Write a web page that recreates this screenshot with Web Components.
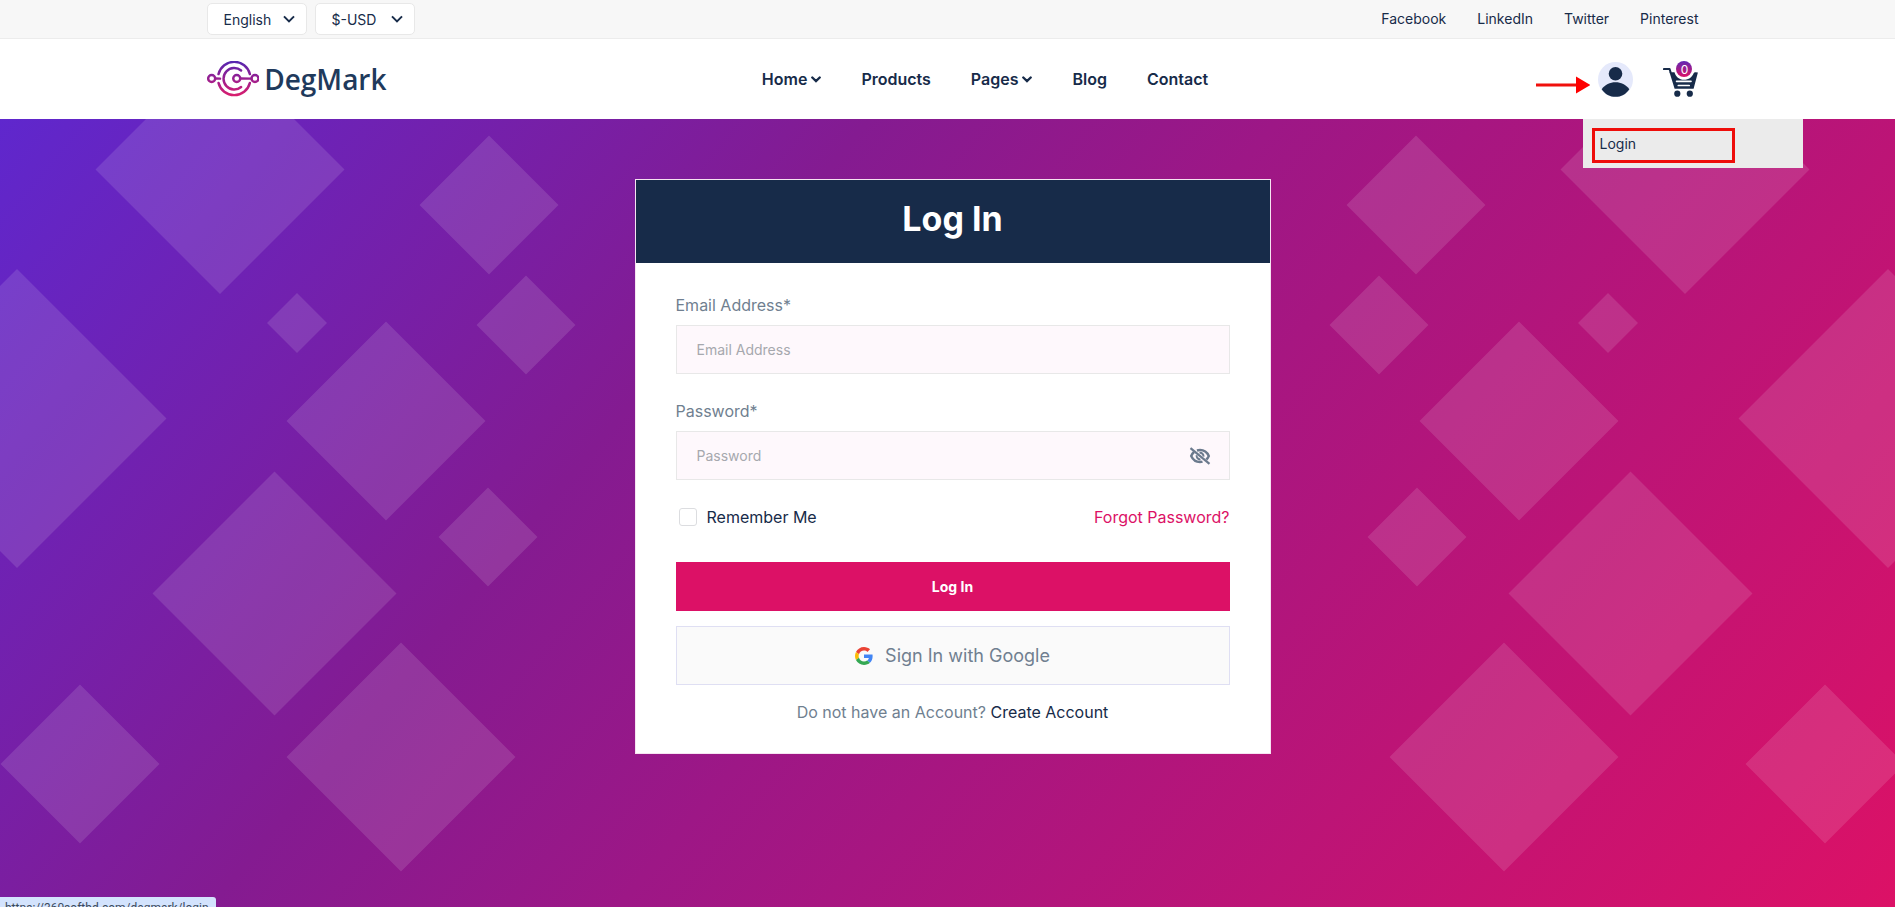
<!DOCTYPE html>
<html lang="en">
<head>
<meta charset="UTF-8">
<meta name="viewport" content="width=device-width, initial-scale=1">
<title>DegMark - Log In</title>
<style>
    :root {
        --navy: #172b49;
        --primary: #dc1166;
        --muted: #707f90;
        --line: #e8e8e8;
        --gutter: 10px;
        --container: 1492px;
    }
    * { box-sizing: border-box; }
    body {
        margin: 0;
        min-height: 100vh;
        display: flex;
        flex-direction: column;
        overflow-x: hidden;
        font-family: Inter, "Liberation Sans", sans-serif;
        font-size: 16px;
        line-height: 26px;
        color: var(--navy);
    }
    login-hero { flex: 1; }
</style>
</head>
<body>
<top-bar></top-bar>
<site-header></site-header>
<login-hero>
    <login-card heading="Log In">
        <form-field label="Email Address" type="email"></form-field>
        <form-field label="Password" type="password"></form-field>
    </login-card>
</login-hero>
<status-bubble>https://360softbd.com/degmark/login</status-bubble>

<script>
const base = `
    * { box-sizing: border-box; }
    a { color: inherit; text-decoration: none; }
    button, input, select { font-family: inherit; color: inherit; }
    svg { display: block; }
`;

class PickList extends HTMLElement {
    constructor() {
        super();
        const shadow = this.attachShadow({ mode: 'open' });
        const options = this.getAttribute('options').split(',');

        shadow.innerHTML = `
            <style>
                ${base}
                :host { display: grid; width: 100px; height: 32px; }
                select, svg { grid-area: 1 / 1; }
                select {
                    appearance: none;
                    width: 100%;
                    height: 100%;
                    padding: 0 16px;
                    font-size: 14px;
                    background: #fff;
                    border: 1px solid var(--line);
                    border-radius: 5px;
                }
                svg { place-self: center end; margin-right: 12px; pointer-events: none; }
            </style>
            <select aria-label="${this.getAttribute('label')}">
                ${options.map(option => `<option>${option}</option>`).join('')}
            </select>
            <svg width="12" height="8" viewBox="0 0 12 8" fill="none" stroke="#172b49" stroke-width="2"><path d="M1 1.4 6 6.4 11 1.4"/></svg>
        `;
    }
}

class TopBar extends HTMLElement {
    constructor() {
        super();
        const shadow = this.attachShadow({ mode: 'open' });
        const links = ['Facebook', 'LinkedIn', 'Twitter', 'Pinterest'];

        shadow.innerHTML = `
            <style>
                ${base}
                :host {
                    display: block;
                    padding-left: var(--gutter);
                    background: #f7f7f7;
                    border-bottom: 1px solid #ececec;
                }
                .container {
                    display: flex;
                    justify-content: space-between;
                    align-items: center;
                    max-width: var(--container);
                    height: 38px;
                    margin: 0 auto;
                }
                .lists { display: flex; gap: 8px; }
                nav { display: flex; gap: 31px; font-size: 14px; }
            </style>
            <div class="container">
                <div class="lists">
                    <pick-list label="Language" options="English"></pick-list>
                    <pick-list label="Currency" options="$-USD"></pick-list>
                </div>
                <nav>${links.map(link => `<a href="#">${link}</a>`).join('')}</nav>
            </div>
        `;
    }
}

class BrandLogo extends HTMLElement {
    constructor() {
        super();
        const shadow = this.attachShadow({ mode: 'open' });

        shadow.innerHTML = `
            <style>
                ${base}
                :host { display: block; width: 180px; }
                a {
                    display: flex;
                    align-items: center;
                    gap: 5px;
                    font-family: "Open Sans", "Noto Sans", sans-serif;
                    font-size: 28px;
                    font-weight: 600;
                    line-height: 36px;
                    color: #1f3a5c;
                }
            </style>
            <a href="#">
                <svg width="54" height="36" viewBox="0 0 54 36" fill="none" stroke-width="2.5" stroke-linecap="round">
                    <defs>
                        <linearGradient id="g" gradientUnits="userSpaceOnUse" x1="0" y1="0" x2="0" y2="36">
                            <stop offset="0" stop-color="#5527b0"/>
                            <stop offset=".5" stop-color="#9a1f90"/>
                            <stop offset="1" stop-color="#dc1e6c"/>
                        </linearGradient>
                    </defs>
                    <g stroke="url(#g)">
                        <circle cx="4.8" cy="17.5" r="3.6"/>
                        <circle cx="49.2" cy="17.5" r="3.6"/>
                        <circle cx="30.5" cy="17.5" r="3.6"/>
                        <path d="M34.2 17.5 45.5 17.6"/>
                        <path d="M8.5 17.5 13.4 17.6"/>
                        <path d="M11.8 13A16.6 16.6 0 0 1 44 13"/>
                        <path d="M11.8 22A16.6 16.6 0 0 0 44 22"/>
                        <path d="M35 9.3A11 11 0 1 0 35 26.2"/>
                    </g>
                </svg>
                <span>DegMark</span>
            </a>
        `;
    }
}

class UserMenu extends HTMLElement {
    constructor() {
        super();
        const shadow = this.attachShadow({ mode: 'open' });

        shadow.innerHTML = `
            <style>
                ${base}
                :host {
                    display: flex;
                    align-items: center;
                    position: relative;
                    height: 100%;
                    padding-left: 15px;
                }
                button { padding: 0; border: 0; background: none; }
                .pointer { position: absolute; right: 43px; top: 37px; }
                .menu {
                    position: absolute;
                    left: 0;
                    top: 100%;
                    z-index: 2;
                    width: 220px;
                    padding: 9px 9px 5px;
                    background: #ebebeb;
                }
                .menu a {
                    display: block;
                    width: 143px;
                    padding: 0 4px 3px;
                    font-size: 14px;
                    line-height: 26px;
                    border: 3px solid #ee0d0a;
                }
            </style>
            <svg class="pointer" width="54" height="18" viewBox="0 0 54 18"><path d="M0 8.9H42" stroke="#f0100c" stroke-width="3"/><path d="M40 .5 54.500 9 40 17.500Z" fill="#fe0000"/></svg>
            <button type="button" aria-label="Account">
                <svg width="35" height="35" viewBox="0 0 35 35">
                    <circle cx="17.500" cy="17.500" r="17.500" fill="#e5e9fb"/>
                    <circle cx="17.500" cy="11.700" r="6.800" fill="#172b49"/>
                    <path d="M3.700 27.200C7 22.600 12 20.300 17.500 20.300S28 22.600 31.300 27.200C28 32.300 23 34.800 17.500 34.800S7 32.300 3.700 27.200Z" fill="#172b49"/>
                </svg>
            </button>
            <div class="menu"><a href="#">Login</a></div>
        `;
    }
}

class CartButton extends HTMLElement {
    constructor() {
        super();
        const shadow = this.attachShadow({ mode: 'open' });

        shadow.innerHTML = `
            <style>
                ${base}
                :host { display: block; position: relative; }
                a { display: block; }
                .count {
                    position: absolute;
                    left: 13px;
                    top: 0;
                    width: 16px;
                    height: 16px;
                    border-radius: 50%;
                    background: linear-gradient(#5f27b5, #dc1166);
                    color: #fff;
                    font-size: 12px;
                    line-height: 17px;
                    text-align: center;
                }
            </style>
            <a href="#" aria-label="Cart">
                <svg width="35" height="36" viewBox="0 0 35 36">
                    <path d="M.800 8.100H6.600L7.600 11.400" fill="none" stroke="#172b49" stroke-width="2" stroke-linecap="round" stroke-linejoin="round"/>
                    <path d="M6.500 11.200H11.500C12.500 15.600 16.300 18.800 21 18.800S29.400 15.600 30.500 12.400Q31.200 11.200 32.600 11.300L34.900 11.500 30.600 27.800H11.600Z" fill="#172b49"/>
                    <path d="M13.600 20.300H28M15.300 24.500H26.200" stroke="#fff" stroke-width="1.700" stroke-linecap="round"/>
                    <circle cx="14.300" cy="32.700" r="3.100" fill="#172b49"/>
                    <circle cx="26.800" cy="32.700" r="3.100" fill="#172b49"/>
                </svg>
                <span class="count">0</span>
            </a>
        `;
    }
}

class SiteHeader extends HTMLElement {
    constructor() {
        super();
        const shadow = this.attachShadow({ mode: 'open' });
        const chevron = '<svg width="10" height="7" viewBox="0 0 10 7" fill="none" stroke="#172b49" stroke-width="2.4" stroke-linecap="round"><path d="M1.300 1.500 5 5 8.700 1.500"/></svg>';
        const items = [
            { name: 'Home', open: true },
            { name: 'Products' },
            { name: 'Pages', open: true },
            { name: 'Blog' },
            { name: 'Contact' }
        ];

        shadow.innerHTML = `
            <style>
                ${base}
                :host { display: block; padding-left: var(--gutter); background: #fff; }
                .container {
                    display: flex;
                    justify-content: space-between;
                    align-items: center;
                    max-width: var(--container);
                    height: 80px;
                    margin: 0 auto;
                }
                nav { display: flex; gap: 40px; font-weight: 600; }
                nav a { display: flex; align-items: center; gap: 4px; }
                .actions { display: flex; align-items: center; gap: 30px; height: 100%; }
            </style>
            <div class="container">
                <brand-logo></brand-logo>
                <nav>${items.map(item => `<a href="#">${item.name}${item.open ? chevron : ''}</a>`).join('')}</nav>
                <div class="actions">
                    <user-menu></user-menu>
                    <cart-button></cart-button>
                </div>
            </div>
        `;
    }
}

// [center x, center y, half diagonal]
const diamonds = [
    [220, 50.5, 124.5],
    [489, 86, 69.5],
    [17, 299.5, 149.5],
    [297, 204, 30],
    [526, 206, 49.5],
    [386, 302, 99.5],
    [274.5, 474.5, 122],
    [488, 418, 49.5],
    [80, 645, 79.5],
    [401, 638, 114.5]
];

class LoginHero extends HTMLElement {
    constructor() {
        super();
        const shadow = this.attachShadow({ mode: 'open' });
        const path = diamonds.map(([x, y, r]) => `M${x} ${y - r}l${r} ${r}l${-r} ${r}l${-r} ${-r}Z`).join('');
        const shapes = side => `<svg class="shapes ${side}" width="620" height="788" viewBox="0 0 620 788"><path d="${path}" fill="#fff" fill-opacity=".12"/></svg>`;

        shadow.innerHTML = `
            <style>
                ${base}
                :host {
                    display: block;
                    position: relative;
                    overflow: hidden;
                    padding: 60px 0 60px var(--gutter);
                    background: linear-gradient(130deg, #5f27cd 0%, #841b91 34%, #9d1786 50%, #dc1166 100%);
                }
                .shapes { position: absolute; top: 0; }
                .left { left: 0; }
                .right { right: calc(0px - var(--gutter)); transform: scaleX(-1); }
            </style>
            ${shapes('left')}
            ${shapes('right')}
            <slot></slot>
        `;
    }
}

class FormField extends HTMLElement {
    constructor() {
        super();
        const shadow = this.attachShadow({ mode: 'open' });
        const label = this.getAttribute('label');
        const type = this.getAttribute('type');
        const eye = `
            <button type="button" aria-label="Show password">
                <svg width="22" height="18" viewBox="0 0 22 18" fill="none" stroke="#6b7a8d">
                    <path d="M5 5Q3 6.800 2.200 9C4 13 7.200 15 11 15Q12.300 15 13.500 14.600M8 3.500Q9.400 3 11 3C14.800 3 18 5 19.800 9Q19 11 17.300 12.500" stroke-width="2.400"/>
                    <path d="M10.500 5.800A3.500 3.500 0 0 1 14.500 9.700M7.700 8.300A3.500 3.500 0 0 0 11.500 12.400" stroke-width="2"/>
                    <path d="M1.500 1.200 20.500 16.800" stroke-width="2.200"/>
                </svg>
            </button>`;

        shadow.innerHTML = `
            <style>
                ${base}
                :host { display: block; margin-bottom: 24px; }
                label { display: block; margin-bottom: 7px; color: var(--muted); }
                .box {
                    display: flex;
                    align-items: center;
                    height: 49px;
                    padding: 0 18px 0 20px;
                    background: #fef8fc;
                    border: 1px solid var(--line);
                }
                input {
                    flex: 1;
                    min-width: 0;
                    padding: 0;
                    border: 0;
                    outline: 0;
                    background: none;
                    font-size: 14px;
                }
                input::placeholder { color: #a6a8ae; opacity: 1; }
                button { padding: 0; border: 0; background: none; }
            </style>
            <label for="input">${label}*</label>
            <div class="box">
                <input id="input" type="${type}" placeholder="${label}">
                ${type === 'password' ? eye : ''}
            </div>
        `;
    }
}

class LoginCard extends HTMLElement {
    constructor() {
        super();
        const shadow = this.attachShadow({ mode: 'open' });

        shadow.innerHTML = `
            <style>
                ${base}
                :host {
                    display: block;
                    position: relative;
                    max-width: 636px;
                    margin: 0 auto;
                    background: #fff;
                    border: 1px solid #f6e3f1;
                }
                h1 {
                    margin: 0;
                    padding: 16px 0 21px;
                    background: var(--navy);
                    color: #fff;
                    font-size: 34px;
                    font-weight: 700;
                    line-height: 46px;
                    text-align: center;
                }
                .body { padding: 29px 40px 28px; }
                .row { display: flex; justify-content: space-between; margin-bottom: 32px; }
                .remember { display: flex; align-items: center; gap: 10px; padding-left: 3px; }
                .remember input {
                    appearance: none;
                    width: 18px;
                    height: 18px;
                    margin: 0;
                    background: #fff;
                    border: 1px solid #dcdde0;
                    border-radius: 3px;
                }
                .remember input:checked { background: var(--primary); }
                .forgot { color: var(--primary); }
                button {
                    display: flex;
                    justify-content: center;
                    align-items: center;
                    width: 100%;
                    margin-bottom: 15px;
                }
                .submit {
                    height: 49px;
                    border: 0;
                    background: var(--primary);
                    color: #fff;
                    font-size: 14px;
                    font-weight: 700;
                }
                .google {
                    gap: 12px;
                    height: 59px;
                    margin-bottom: 14px;
                    border: 1px solid #dfdff3;
                    background: #fafafa;
                    color: var(--muted);
                    font-size: 18px;
                }
                p { margin: 0; text-align: center; color: var(--muted); }
                p a { color: var(--navy); }
            </style>
            <h1>${this.getAttribute('heading')}</h1>
            <div class="body">
                <slot></slot>
                <div class="row">
                    <label class="remember" for="remember"><input id="remember" type="checkbox">Remember Me</label>
                    <a class="forgot" href="#">Forgot Password?</a>
                </div>
                <button class="submit" type="button">Log In</button>
                <button class="google" type="button">
                    <svg width="18" height="18" viewBox="0 0 48 48">
                        <path fill="#EA4335" d="M24 9.500c3.540 0 6.710 1.220 9.210 3.600l6.850-6.850C35.900 2.380 30.470 0 24 0 14.620 0 6.510 5.380 2.560 13.220l7.980 6.190C12.430 13.720 17.740 9.500 24 9.500z"/>
                        <path fill="#4285F4" d="M46.980 24.550c0-1.570-.15-3.090-.38-4.550H24v9.020h12.940c-.58 2.960-2.260 5.480-4.780 7.180l7.730 6c4.510-4.180 7.090-10.360 7.090-17.650z"/>
                        <path fill="#FBBC05" d="M10.530 28.590c-.48-1.450-.76-2.990-.76-4.590s.27-3.140.76-4.590l-7.980-6.190C.92 16.460 0 20.120 0 24c0 3.880.92 7.540 2.560 10.780l7.970-6.190z"/>
                        <path fill="#34A853" d="M24 48c6.480 0 11.930-2.130 15.890-5.810l-7.730-6c-2.150 1.450-4.920 2.300-8.160 2.300-6.260 0-11.570-4.220-13.470-9.910l-7.980 6.190C6.510 42.620 14.620 48 24 48z"/>
                    </svg>
                    <span>Sign In with Google</span>
                </button>
                <p>Do not have an Account? <a href="#">Create Account</a></p>
            </div>
        `;
    }
}

class StatusBubble extends HTMLElement {
    constructor() {
        super();
        const shadow = this.attachShadow({ mode: 'open' });

        shadow.innerHTML = `
            <style>
                :host {
                    position: fixed;
                    left: 0;
                    bottom: 0;
                    z-index: 3;
                    height: 10px;
                    padding: 3px 7px 0 5px;
                    overflow: hidden;
                    box-sizing: border-box;
                    border-top-right-radius: 3px;
                    background: #d3e3fd;
                    color: #3c4a5c;
                    font-family: Roboto, "Noto Sans", sans-serif;
                    font-size: 12px;
                    line-height: 16px;
                    white-space: nowrap;
                }
            </style>
            <slot></slot>
        `;
    }
}

customElements.define('pick-list', PickList);
customElements.define('top-bar', TopBar);
customElements.define('brand-logo', BrandLogo);
customElements.define('user-menu', UserMenu);
customElements.define('cart-button', CartButton);
customElements.define('site-header', SiteHeader);
customElements.define('form-field', FormField);
customElements.define('login-card', LoginCard);
customElements.define('login-hero', LoginHero);
customElements.define('status-bubble', StatusBubble);
</script>
</body>
</html>
